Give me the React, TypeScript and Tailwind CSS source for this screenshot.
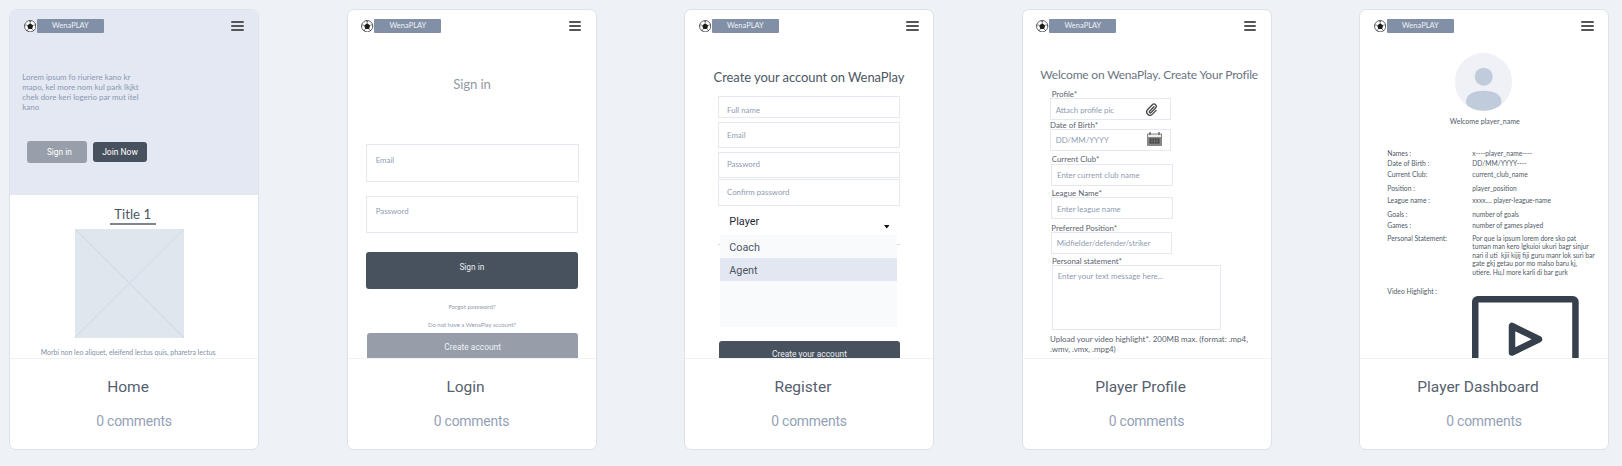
import React from "react";

type Children = { children?: React.ReactNode };

function Ball() {
  return (
    <svg viewBox="0 0 24 24" className="mt-[0.6px] size-[12.4px] shrink-0">
      <circle cx="12" cy="12" r="11" fill="#fff" stroke="#555" strokeWidth="1.7" />
      <path d="M12 6.2l5.8 4.3-2.2 6.9H8.4L6.2 10.500z" fill="#1c1c1c" />
      <path d="M12 6.500V2M17.500 10.500l4.200-1.500M15.500 17l2.700 3.800M8.500 17l-2.700 3.800M6.500 10.500L2.300 9" stroke="#555" strokeWidth="1.300" />
      <path d="M8.800 1.600L12 3.300l3.200-1.700zM22.900 8.500l-1.500 2.500 1.300 3zM1.100 8.500l1.500 2.500-1.300 3zM17 21.800l.8-2.600 2.500-.5zM7 21.800l-.8-2.600-2.500-.5z" fill="#333" />
    </svg>
  );
}

function Header() {
  return (
    <header className="flex h-[30px] shrink-0 items-start pt-[9.3px] pl-[13.700px]">
      <Ball />
      <div className="ml-[0.8px] h-[14px] w-[67px] shrink-0 rounded-[1px] bg-[#8290a7] text-center text-[7.500px] leading-[14.500px] text-[#eef1f6]">
        WenaPLAY
      </div>
      <div className="mt-[1.700px] ml-[127.500px] flex w-[12.300px] shrink-0 flex-col gap-[2px]">
        <span className="h-[2px] rounded-full bg-[#555]" />
        <span className="h-[2px] rounded-full bg-[#555]" />
        <span className="h-[2px] rounded-full bg-[#555]" />
      </div>
    </header>
  );
}

function Card({ title, children }: Children & { title: string }) {
  return (
    <article className="flex h-[441px] w-[250px] shrink-0 flex-col overflow-hidden rounded-[7px] border border-[#dde2ea] bg-white">
      <div className="flex h-[349px] shrink-0 flex-col overflow-hidden border-b border-[#f1f2f4] font-['Lato',sans-serif] whitespace-nowrap">
        <Header />
        {children}
      </div>
      <h2 className="mt-[18.400px] pr-[12px] text-center font-['Roboto',sans-serif] text-[15.500px] leading-[20px] text-[#56616e]">{title}</h2>
      <p className="mt-[15px] text-center font-['Roboto',sans-serif] text-[13.900px] leading-[18px] tracking-[-0.200px] text-[#94a1b6]">0 comments</p>
    </article>
  );
}

function Field({ className, children }: Children & { className: string }) {
  return (
    <div className={"shrink-0 border border-[#e5e8ef] text-[7.850px] leading-[10px] text-[#8f9cb3] " + className}>{children}</div>
  );
}

function Label({ className, children }: Children & { className: string }) {
  return <div className={"-mb-px shrink-0 text-[7.900px] leading-[10px] text-[#5a6370] " + className}>{children}</div>;
}

function Home() {
  return (
    <Card title="Home">
      <div className="-mt-[30px] h-[184.700px] shrink-0 bg-[#e3e8f2]">
        <Header />
        <p className="mt-[32.200px] pl-[12.300px] text-[7.900px] leading-[10px] text-[#8c99b2]">
          Lorem ipsum fo riuriere kano kr
          <br />
          mapo, kel more nom kul park lkjkt
          <br />
          chek dore keri logerio par mut itel
          <br />
          kano
        </p>
        <div className="mt-[29.100px] flex items-center gap-[6.300px] pl-[17px] font-['Roboto',sans-serif] text-white">
          <div className="h-[21.700px] w-[59.700px] rounded-[3px] bg-[#989fab] pl-[5px] text-center text-[8.300px] leading-[22px]">Sign in</div>
          <div className="h-[19.400px] w-[54px] rounded-[3px] bg-[#48525e] text-center text-[8.500px] leading-[21px]">Join Now</div>
        </div>
      </div>
      <h3 className="mt-[11.300px] ml-[99.700px] h-[18.900px] w-[46px] shrink-0 border-b-2 border-[#7c8592] text-center text-[13.200px] leading-[16.700px] text-[#4b5662]">
        Title 1
      </h3>
      <svg viewBox="0 0 109 109" preserveAspectRatio="none" className="mt-[4.300px] ml-[65px] h-[108.700px] w-[109px] shrink-0 bg-[#dfe6ee]">
        <path d="M0 0L109 109M109 0L0 109" stroke="#d4dce8" strokeWidth="1.200" />
      </svg>
      <p className="mt-[9.600px] pl-[30.700px] text-[6.920px] leading-[10px] text-[#8290a6]">
        Morbi non leo aliquet, eleifend lectus quis, pharetra lectus
      </p>
    </Card>
  );
}

function Login() {
  return (
    <Card title="Login">
      <h3 className="mt-[34.800px] pl-px text-center text-[13.200px] leading-[18px] tracking-[-0.150px] text-[#9399a5]">Sign in</h3>
      <Field className="mt-[51.500px] ml-[18.500px] h-[38px] w-[212.700px] pt-[9.900px] pl-[8.700px]">Email</Field>
      <Field className="mt-[13.400px] ml-[18px] h-[37.600px] w-[212.500px] pt-[9.500px] pl-[9.200px]">Password</Field>
      <div className="mt-[19px] ml-[18.500px] h-[36.700px] w-[211.700px] shrink-0 rounded-[3px] bg-[#48525e] pt-[10px] text-center font-['Roboto',sans-serif] text-[8.300px] leading-[10px] text-[#e9ecf0]">
        Sign in
      </div>
      <p className="mt-[14.500px] pl-px text-center text-[6.100px] leading-[8px] text-[#8f9aae]">Forgot password?</p>
      <p className="mt-[10px] pl-px text-center text-[5.900px] leading-[8px] text-[#8f9aae]">Do not have a WenaPlay account?</p>
      <div className="mt-[3.300px] ml-[19.500px] h-[36px] w-[211.300px] shrink-0 rounded-[3px] bg-[#979eaa] pt-[9.500px] text-center font-['Roboto',sans-serif] text-[8.400px] leading-[10px] text-[#eef0f3]">
        Create account
      </div>
    </Card>
  );
}

function Register() {
  return (
    <Card title="Register">
      <h3 className="mt-[28.100px] text-center text-[13px] leading-[18px] tracking-[-0.070px] text-[#4d5863]">Create your account on WenaPlay</h3>
      <Field className="mt-[9.600px] ml-[33.300px] h-[22.600px] w-[182px] pt-[8.200px] pl-[7.700px]">Full name</Field>
      <Field className="mt-[4px] ml-[33.300px] h-[25.700px] w-[182px] pt-[6.300px] pl-[7.700px]">Email</Field>
      <Field className="mt-[4.300px] ml-[33.300px] h-[25.400px] w-[182px] pt-[5.900px] pl-[7.700px]">Password</Field>
      <Field className="mt-[1.600px] ml-[33.300px] h-[26.400px] w-[182px] pt-[6.600px] pl-[7.700px]">Confirm password</Field>
      <div className="flex h-[29.300px] shrink-0 justify-between pt-[9.500px] pr-[44px] pl-[44.300px] font-['Roboto',sans-serif] text-[10.900px] leading-[14px] text-[#1f2937]">
        <span>Player</span>
        <svg viewBox="0 0 10 6" className="mt-[10.100px] h-[3.500px] w-[5.500px]">
          <path d="M0 0h10L5 6z" fill="#111" />
        </svg>
      </div>
      <div className="flex shrink-0 pl-[33.300px]">
        <span className="mt-[9px] h-px w-[1.400px] bg-[#d3d9e3]" />
        <div className="h-[92px] w-[177.600px] bg-[#f9fafc] font-['Roboto',sans-serif] text-[10.800px] leading-[14px] text-[#4b5563]">
          <div className="h-[23px] pt-[6.400px] pl-[9.600px]">Coach</div>
          <div className="h-[23px] bg-[#e3e7f1] pt-[6.400px] pl-[9.600px]">Agent</div>
        </div>
        <span className="mt-[9px] h-px w-[3px] bg-[#d3d9e3]" />
      </div>
      <div className="mt-[14px] ml-[34px] h-[36px] w-[181px] shrink-0 rounded-[3px] bg-[#48525e] pt-[8.500px] text-center font-['Roboto',sans-serif] text-[8.400px] leading-[10px] text-[#e9ecf0]">
        Create your account
      </div>
    </Card>
  );
}

function Paperclip() {
  return (
    <svg viewBox="0 0 24 24" fill="none" stroke="#444" strokeWidth="2.400" strokeLinecap="round" className="-mt-[1.500px] size-[13px]">
      <path d="M16.500 7L8.600 15.200a1.800 1.800 0 0 0 2.600 2.500l8.300-8.600a4.200 4.200 0 0 0-6-5.900L5 12a6.100 6.100 0 0 0 8.700 8.600l6.800-7" />
    </svg>
  );
}

function Calendar() {
  return (
    <svg viewBox="0 0 30 28" className="-mt-[3.500px] h-[14px] w-[15px]">
      <path d="M1 4h28v23H1z" fill="#eee" stroke="#666" strokeWidth="1.600" />
      <path d="M1 10h28v17H1z" fill="#888" />
      <path d="M6 0v6M24 0v6" stroke="#444" strokeWidth="2.200" />
      <path d="M5 13h20v10H5z" fill="#333" />
      <path d="M5 16.300h20M5 19.700h20M10 13v10M15 13v10M20 13v10" stroke="#999" />
    </svg>
  );
}

function Profile() {
  return (
    <Card title="Player Profile">
      <h3 className="mt-[26.700px] pl-[17.800px] text-[12px] leading-[16px] tracking-[-0.200px] text-[#6a7582]">Welcome on WenaPlay. Create Your Profile</h3>
      <Label className="mt-[6.700px] pl-[29.200px]">Profile*</Label>
      <Field className="ml-[27.200px] flex h-[22px] w-[121.600px] justify-between pt-[5.600px] pr-[12px] pl-[5px]">
        Attach profile pic
        <Paperclip />
      </Field>
      <Label className="pl-[27.500px]">Date of Birth*</Label>
      <Field className="ml-[27.200px] flex h-[21.700px] w-[121.600px] justify-between pt-[4.900px] pr-[8.500px] pl-[5px]">
        DD/MM/YYYY
        <Calendar />
      </Field>
      <Label className="mt-[3.200px] mb-[-0.500px]! pl-[29.200px]">Current Club*</Label>
      <Field className="ml-[28.800px] h-[22px] w-[121.400px] pt-[5.500px] pl-[4.700px]">Enter current club name</Field>
      <Label className="mt-[2.700px] pl-[29.200px]">League Name*</Label>
      <Field className="ml-[28.800px] h-[22px] w-[121.400px] pt-[5.600px] pl-[4.700px]">Enter league name</Field>
      <Label className="mt-[3.300px] mb-[-0.500px]! pl-[28.800px]">Preferred Position*</Label>
      <Field className="ml-[28.300px] h-[21.600px] w-[121.400px] pt-[5.200px] pl-[4.900px]">Midfielder/defender/striker</Field>
      <Label className="mt-[1.900px] mb-[-0.500px]! pl-[29.500px]">Personal statement*</Label>
      <Field className="ml-[29.200px] h-[65.200px] w-[169.600px] pt-[5.200px] pl-[5px]">Enter your text message here...</Field>
      <p className="mt-[3.300px] pl-[27.500px] text-[7.950px] leading-[10.600px] text-[#5a6370]">
        Upload your video highlight*. 200MB max. (format: .mp4,
        <br />
        .wmv, .vmx, .mpg4)
      </p>
    </Card>
  );
}

function Row({ label, className, children }: Children & { label: string; className: string }) {
  return (
    <div className={"flex shrink-0 pl-[27.300px] text-[6.650px] leading-[10px] text-[#4f5a67] " + className}>
      <span className="w-[85px] shrink-0 text-[6.800px]">{label}</span>
      <span className="whitespace-pre">{children}</span>
    </div>
  );
}

function Dashboard() {
  return (
    <Card title="Player Dashboard">
      <svg viewBox="0 0 172 172" className="mt-[13.300px] ml-[94.700px] size-[57.500px] shrink-0 rounded-full bg-[#eff1f7]">
        <circle cx="86" cy="71" r="27" fill="#c0ccdb" />
        <path d="M33 146c0-22 22-33 53-33s53 11 53 33c0 18-25 27-53 27s-53-9-53-27z" fill="#c0ccdb" />
      </svg>
      <p className="mt-[6.600px] pl-[1.500px] text-center text-[7.050px] leading-[10px] text-[#4f5a67]">Welcome player_name</p>
      <Row className="mt-[20.500px]" label="Names :">x----player_name----</Row>
      <Row className="mt-[0.600px]" label="Date of Birth :">DD/MM/YYYY----</Row>
      <Row className="mt-[0.700px]" label="Current Club:">current_club_name</Row>
      <Row className="mt-[4px]" label="Position :">player_position</Row>
      <Row className="mt-[2.200px]" label="League name :">xxxx.... player-league-name</Row>
      <Row className="mt-[3.300px]" label="Goals :">number of goals</Row>
      <Row className="mt-[1.300px]" label="Games :">number of games played</Row>
      <Row className="mt-[3.900px] leading-[8.500px]!" label="Personal Statement:">
        {"Por que la ipsum lorem dore sko pat\ntuman man kero lgkuioi ukuri bagr sinjur\nnari il uti  kjii kijij fiji guru manr lok suri bar\ngate gkj getau por mo malso baru kj,\nutiere. Hu,l more karli di bar gurk"}
      </Row>
      <Row className="mt-[9.300px]" label="Video Highlight :">
        <svg viewBox="0 0 107 80" fill="none" stroke="#36404d" strokeWidth="6.500" strokeLinejoin="round" className="mt-[10.800px] h-[80px] w-[107px]">
          <rect x="3.250" y="3.250" width="100.200" height="90" rx="2.500" />
          <path d="M40 30v26.500l27-13.250z" />
        </svg>
      </Row>
    </Card>
  );
}

export default function App() {
  return (
    <main className="flex h-[466px] w-[1622px] items-start gap-[87.500px] overflow-hidden bg-[#eef2f7] pt-[9px] pl-[9px]">
      <Home />
      <Login />
      <Register />
      <Profile />
      <Dashboard />
    </main>
  );
}
